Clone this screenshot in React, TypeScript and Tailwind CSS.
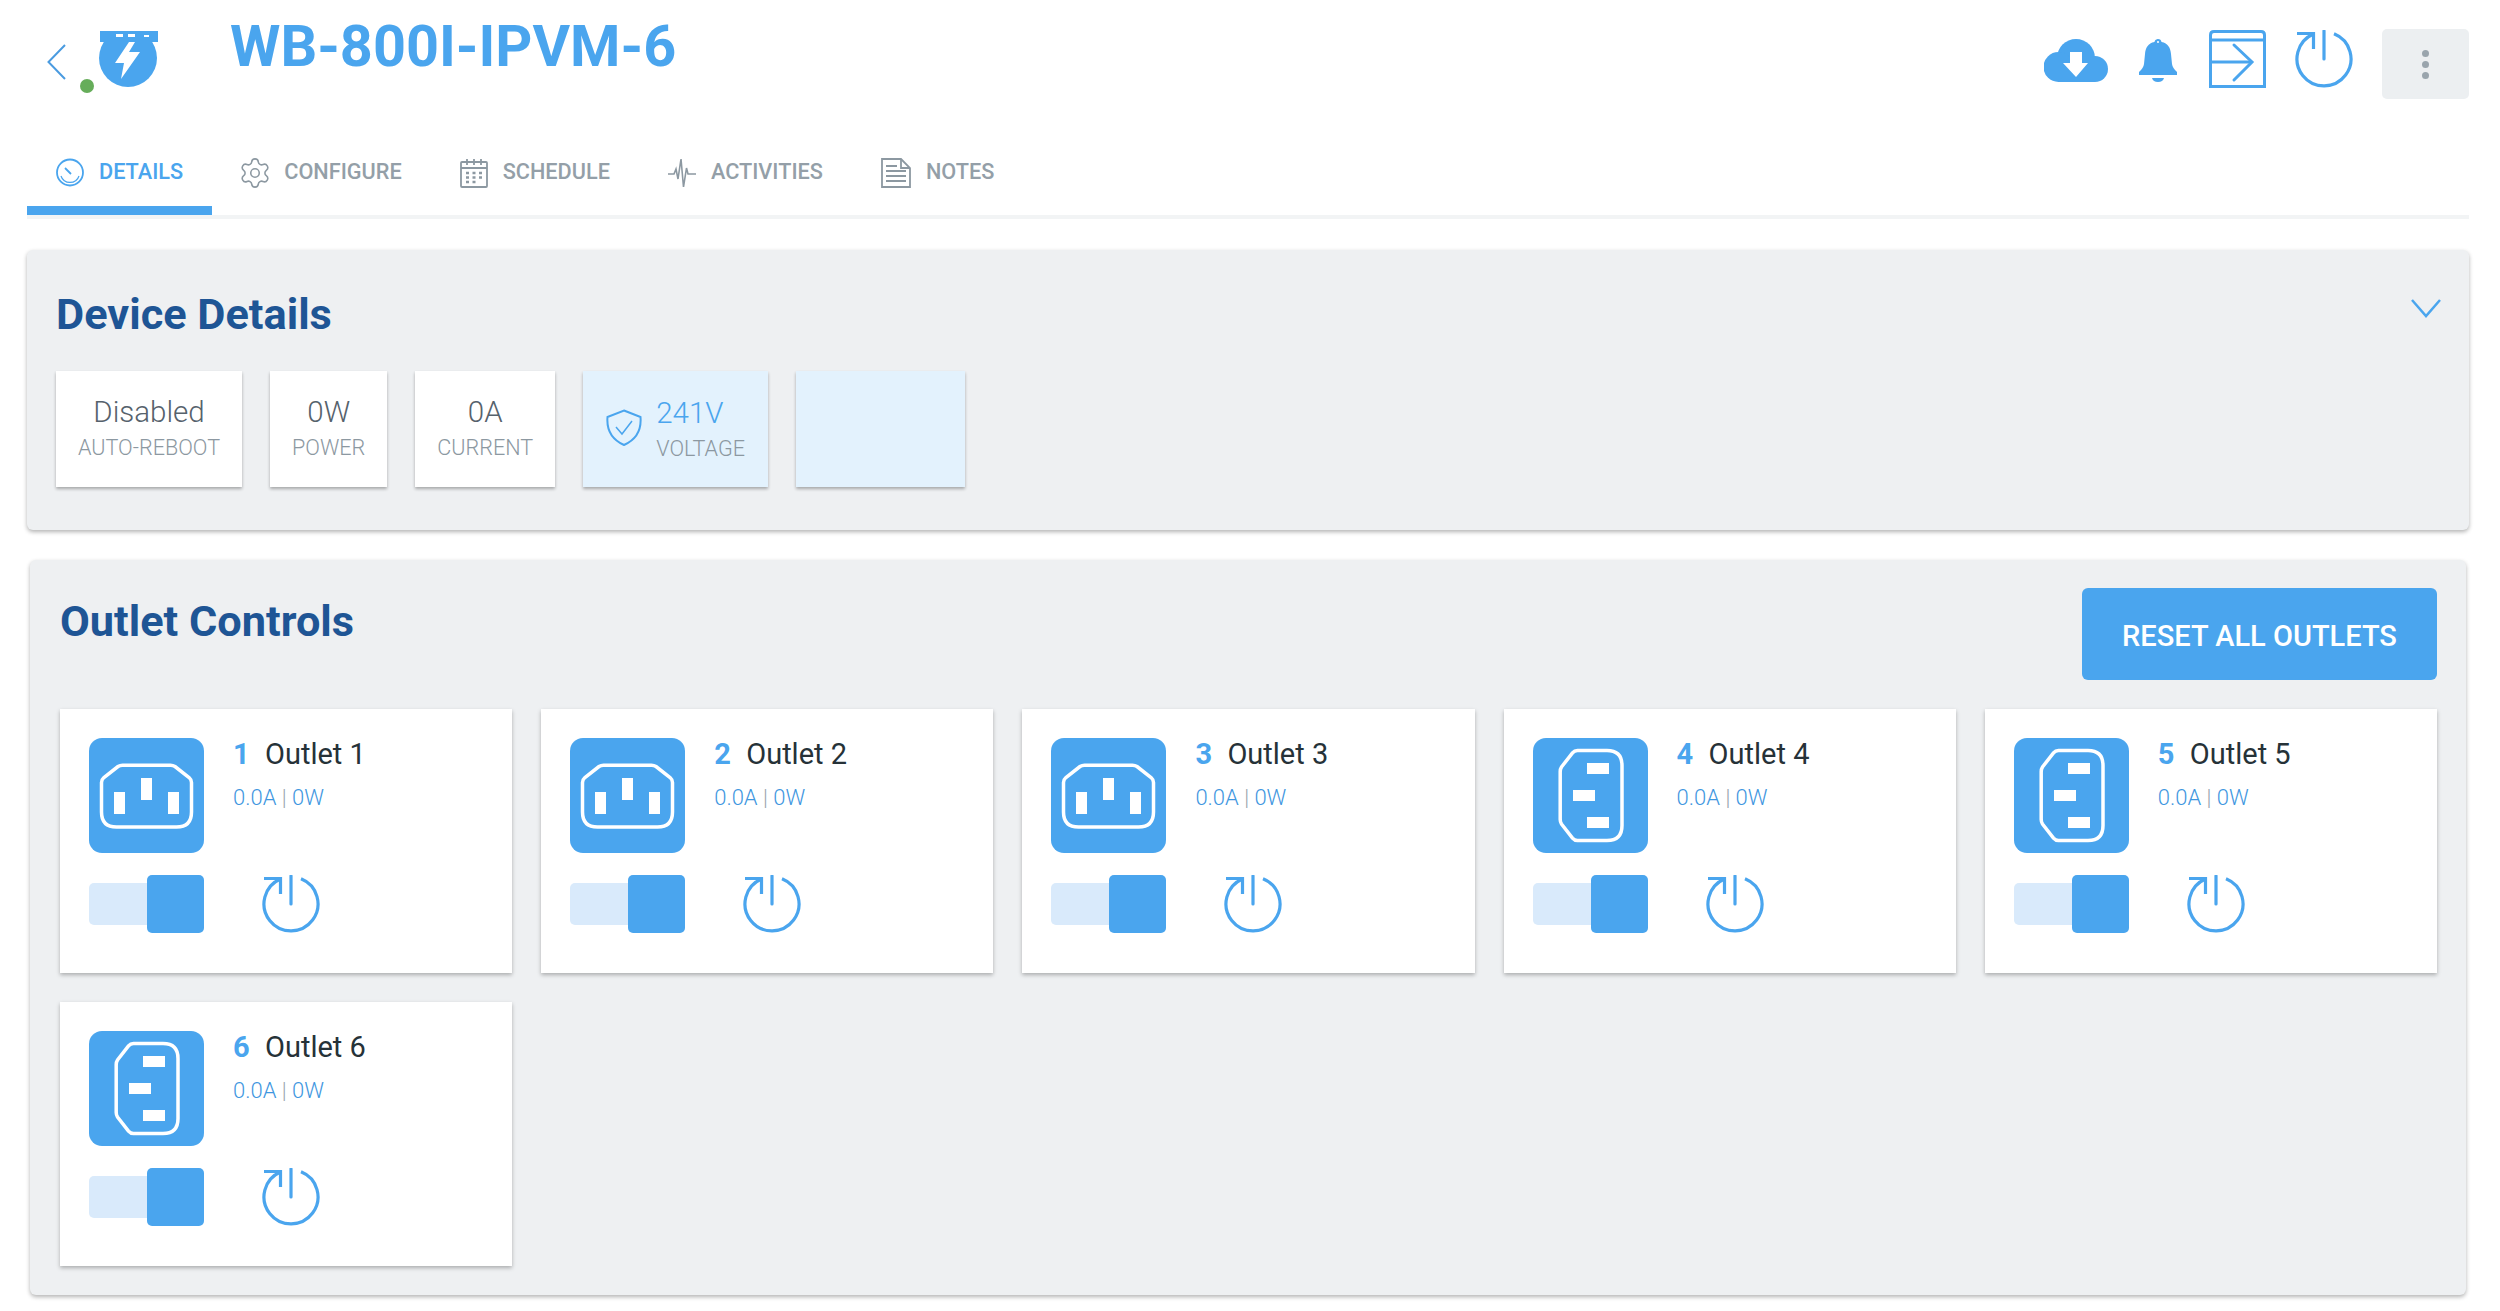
import { Settings } from 'lucide-react';

const OUTLETS = [
  { id: 1, sideways: false },
  { id: 2, sideways: false },
  { id: 3, sideways: false },
  { id: 4, sideways: true },
  { id: 5, sideways: true },
  { id: 6, sideways: true },
];

function PowerIcon() {
  return (
    <svg width="58" height="58" viewBox="0 0 58 58" fill="none" stroke="#4aa5ee" strokeWidth="3.200" className="shrink-0">
      <path d="M39 3.800A27 27 0 1 1 18.500 4" />
      <path d="M2 3.500h16.500V19" />
      <path d="M29 1v28" strokeLinecap="round" />
    </svg>
  );
}

function PlugIcon({ sideways }: { sideways: boolean }) {
  return (
    <div className="h-[115px] w-[115px] shrink-0 rounded-[13px] bg-[#4aa5ee]">
      <svg width="115" height="115" viewBox="0 0 115 115" fill="none">
        <g transform={sideways ? 'rotate(-90 57.5 57.5)' : undefined}>
          <path
            d="M12.500 44.500q0-3 2.400-5L29 28.500q2-1.300 4.500-1.300h48q2.500 0 4.500 1.300l14.100 11q2.400 2 2.400 5V74q0 15-15 15H27.500q-15 0-15-15z"
            stroke="#fff"
            strokeWidth="3.500"
          />
          <rect x="52" y="40" width="11" height="22" fill="#fff" />
          <rect x="25" y="54" width="11" height="22" fill="#fff" />
          <rect x="79" y="54" width="11" height="22" fill="#fff" />
        </g>
      </svg>
    </div>
  );
}

function OutletCard({ id, sideways }: { id: number; sideways: boolean }) {
  return (
    <div className="h-[264px] bg-white p-[29px] shadow-[0_2px_4px_rgba(0,0,0,0.28)]">
      <div className="flex">
        <PlugIcon sideways={sideways} />
        <div className="ml-[29px]">
          <div className="flex text-[29px] leading-[32px]">
            <span className="w-[32px] font-bold text-[#4aa5ee]">{id}</span>
            <span className="text-[#263238]">Outlet {id}</span>
          </div>
          <div className="mt-[15px] text-[22px] font-light leading-[26px] text-[#3f97df]">
            0.0A <span className="text-[#9aa5ad]">|</span> 0W
          </div>
        </div>
      </div>
      <div className="mt-[22px] flex items-center">
        <div className="flex w-[115px] items-center">
          <div className="h-[42px] w-[58px] rounded-l-[5px] bg-[#d9eafb]" />
          <div className="h-[58px] w-[57px] rounded-[5px] bg-[#4aa5ee]" />
        </div>
        <div className="ml-[58px]">
          <PowerIcon />
        </div>
      </div>
    </div>
  );
}

function Stat({ value, label }: { value: string; label: string }) {
  return (
    <div className="h-[116px] bg-white px-[22px] pt-[23px] text-center shadow-[0_2px_3px_rgba(0,0,0,0.3)]">
      <div className="text-[29.500px] font-light leading-[36px] text-[#56626c]">{value}</div>
      <div className="mt-[5px] text-[21.600px] font-light leading-[26px] text-[#8c98a1]">{label}</div>
    </div>
  );
}

const TABS = [
  {
    label: 'DETAILS',
    active: true,
    icon: (
      <svg width="28" height="29" viewBox="0 0 28 29" fill="none" stroke="#4aa5ee" strokeWidth="1.800">
        <circle cx="14" cy="14.500" r="13" />
        <path d="M5 18a9.500 9.500 0 0 0 18 0" strokeWidth="1.200" />
        <path d="M9 10l6 6" />
      </svg>
    ),
  },
  {
    label: 'CONFIGURE',
    active: false,
    icon: <Settings size={34} strokeWidth={1.100} color="#8c98a1" className="-mx-[3px]" />,
  },
  {
    label: 'SCHEDULE',
    active: false,
    icon: (
      <svg width="28" height="30" viewBox="0 0 28 30" fill="none" stroke="#8c98a1" strokeWidth="1.800">
        <rect x="1" y="4" width="26" height="25" rx="1" />
        <path d="M1 10h26M7 1v6M14 1v6M21 1v6" />
        <path d="M6 15h3M12.500 15h3M19 15h3M6 19.500h3M12.500 19.500h3M19 19.500h3M6 24h3M12.500 24h3" strokeWidth="2.500" />
      </svg>
    ),
  },
  {
    label: 'ACTIVITIES',
    active: false,
    icon: (
      <svg width="28" height="30" viewBox="0 0 28 30" fill="none" stroke="#8c98a1" strokeWidth="1.600">
        <path d="M0 16h6l2-5 2 10 3-20 2.500 28 3-19 1.500 6h8" />
      </svg>
    ),
  },
  {
    label: 'NOTES',
    active: false,
    icon: (
      <svg width="30" height="30" viewBox="0 0 30 30" fill="none" stroke="#8c98a1" strokeWidth="1.800">
        <path d="M1 1h19l9 9v19H1z" />
        <path d="M20 1v9h9" />
        <path d="M5 8h11M5 13h20M5 18h20M5 23h20" />
      </svg>
    ),
  },
];

export default function App() {
  return (
    <div className="min-h-[1311px] bg-white pl-[27px] pr-[31px] font-['Roboto',sans-serif]">
      <header className="flex h-[135px] items-start">
        <svg width="19" height="36" viewBox="0 0 19 36" fill="none" stroke="#4a9be0" strokeWidth="2" className="ml-[20px] mt-[44px]">
          <path d="M18 1L1.500 18 18 35" />
        </svg>
        <div className="relative ml-[33px] mt-[31px] h-[57px] w-[59px]">
          <svg width="59" height="57" viewBox="0 0 59 57">
            <rect x="1" y="0" width="58" height="11" fill="#4aa5ee" />
            <circle cx="29" cy="27" r="29" fill="#4aa5ee" />
            <rect x="17" y="3" width="7" height="3" fill="#fff" />
            <rect x="29" y="3" width="7" height="3" fill="#fff" />
            <rect x="45" y="4" width="5" height="2" fill="#fff" />
            <path d="M30 11L16 32h9l-3 16 19-27H30l6-10z" fill="#fff" />
          </svg>
          <div className="absolute left-[-19px] top-[48px] h-[14px] w-[14px] rounded-full bg-[#66ad5a]" />
        </div>
        <h1 className="ml-[72px] mt-[14px] text-[57.600px] font-bold leading-[66px] text-[#4aa5ee]">WB-800I-IPVM-6</h1>
        <div className="ml-auto flex items-start">
          <svg width="64" height="43" viewBox="0 0 64 43" className="mt-[39px]">
            <circle cx="32" cy="19" r="19" fill="#4aa5ee" />
            <circle cx="14.500" cy="28" r="15" fill="#4aa5ee" />
            <circle cx="51" cy="30" r="13" fill="#4aa5ee" />
            <rect x="14" y="28" width="37" height="15" fill="#4aa5ee" />
            <path d="M26 13h12v11h6L32 38 19 24h7z" fill="#fff" />
          </svg>
          <svg width="38" height="43" viewBox="0 0 38 43" className="ml-[31px] mt-[39px]">
            <path d="M19 0q3 0 3.500 3C29 4 31.500 9 32 15l1 10q.5 4 5 8v3H0v-3q4.500-4 5-8l1-10C6.500 9 9 4 15.500 3 16 0 19 0 19 0z" fill="#4aa5ee" />
            <circle cx="19" cy="3" r="1" fill="#fff" />
            <path d="M13 39h12q-1 4-6 4t-6-4z" fill="#4aa5ee" />
          </svg>
          <svg width="57" height="58" viewBox="0 0 57 58" fill="none" stroke="#4aa5ee" strokeWidth="3" className="ml-[32px] mt-[30px]">
            <path d="M1.500 56.500V5q0-3.500 3.500-3.500h47q3.500 0 3.500 3.500v51.500z" />
            <path d="M1.500 10h54" />
            <path d="M1.500 32H43" />
            <path d="M25 15l18 17-18 18" strokeLinecap="round" />
          </svg>
          <div className="ml-[29px] mt-[30px]">
            <PowerIcon />
          </div>
          <button className="ml-[29px] mt-[29px] flex h-[70px] w-[87px] flex-col items-center justify-center gap-[4px] rounded-[5px] bg-[#eceff1]">
            <span className="h-[7px] w-[7px] rounded-full bg-[#9aa5ad]" />
            <span className="h-[7px] w-[7px] rounded-full bg-[#9aa5ad]" />
            <span className="h-[7px] w-[7px] rounded-full bg-[#9aa5ad]" />
          </button>
        </div>
      </header>

      <nav className="flex h-[84px] border-b-4 border-[#f2f4f5]">
        {TABS.map((tab) => (
          <div
            key={tab.label}
            className={`flex h-[80px] items-center gap-[15px] border-b-[9px] px-[29px] pt-[4px] text-[21.700px] font-medium ${
              tab.active ? 'border-[#4aa5ee] text-[#4aa5ee]' : 'border-transparent text-[#949fa8]'
            }`}
          >
            {tab.icon}
            <span>{tab.label}</span>
          </div>
        ))}
      </nav>

      <section className="mt-[31px] h-[280px] rounded-[6px] bg-[#eef0f2] pl-[29px] pr-[28px] pt-[39px] shadow-[0_2px_4px_rgba(0,0,0,0.3)]">
        <div className="flex h-[52px] items-start justify-between">
          <h2 className="text-[43.300px] font-bold leading-[52px] text-[#1e5595]">Device Details</h2>
          <svg width="30" height="21" viewBox="0 0 30 21" fill="none" stroke="#4aa5ee" strokeWidth="2.500" className="mt-[9px]">
            <path d="M1 2l14 16L29 2" />
          </svg>
        </div>
        <div className="mt-[30px] flex gap-[28px]">
          <Stat value="Disabled" label="AUTO-REBOOT" />
          <Stat value="0W" label="POWER" />
          <Stat value="0A" label="CURRENT" />
          <div className="flex h-[116px] items-center bg-[#e3f2fd] pl-[23px] pr-[23px] shadow-[0_2px_3px_rgba(0,0,0,0.3)]">
            <svg width="36" height="37" viewBox="0 0 36 37" fill="none" stroke="#4aa5ee" strokeWidth="2" className="mb-[3px]">
              <path d="M18 1.500L34.500 8c1 12-3 22-16.500 28C5 30 .500 20 1.500 8z" />
              <path d="M10 18l6 7 10-13" strokeWidth="1.500" />
            </svg>
            <div className="ml-[14px] pb-[2px]">
              <div className="text-[29.500px] font-light leading-[36px] text-[#4aa5ee]">241V</div>
              <div className="mt-[5px] text-[21.600px] font-light leading-[26px] text-[#8c98a1]">VOLTAGE</div>
            </div>
          </div>
          <div className="h-[116px] w-[169px] bg-[#e3f2fd] shadow-[0_2px_3px_rgba(0,0,0,0.3)]" />
        </div>
      </section>

      <section className="ml-[3px] mr-[3px] mt-[30px] rounded-[6px] bg-[#eef0f2] pb-[29px] pl-[30px] pr-[29px] pt-[28px] shadow-[0_2px_4px_rgba(0,0,0,0.3)]">
        <div className="flex items-start justify-between">
          <h2 className="mt-[8px] text-[43.300px] font-bold leading-[52px] text-[#1e5595]">Outlet Controls</h2>
          <button className="h-[92px] w-[355px] rounded-[6px] bg-[#4aa5ee] pt-[5px] text-[29px] font-medium text-white">RESET ALL OUTLETS</button>
        </div>
        <div className="mt-[29px] grid grid-cols-5 gap-[29px]">
          {OUTLETS.map((o) => (
            <OutletCard key={o.id} id={o.id} sideways={o.sideways} />
          ))}
        </div>
      </section>
    </div>
  );
}
